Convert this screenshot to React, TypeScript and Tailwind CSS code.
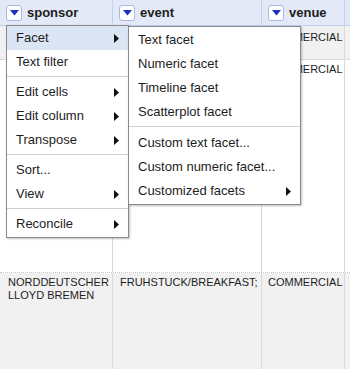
import React from 'react';

const HEADERS = [
    { name: 'sponsor', width: 'w-[113px]', pad: 'pl-[8px]' },
    { name: 'event', width: 'w-[149px]', pad: 'pl-[7px]' },
    { name: 'venue', width: 'w-[83px]', pad: 'pl-[6px]' },
];

const ROWS = [
    { height: 'h-[34px]', bg: 'bg-[#f1f1f1]', border: 'border-b border-dotted border-[#c8c8c8]', pad: 'pt-[5px]', cells: ['', '', 'COMMERCIAL'] },
    { height: 'h-[213px]', bg: 'bg-white', border: 'border-b border-dotted border-[#c8c8c8]', pad: 'pt-[3px]', cells: ['', '', 'COMMERCIAL'] },
    { height: 'h-[120px]', bg: 'bg-[#f1f1f1]', border: '', pad: 'pt-[3px]', cells: ['NORDDEUTSCHER LLOYD BREMEN', 'FRUHSTUCK/BREAKFAST;', 'COMMERCIAL'] },
];

type MenuEntry = { label: string; sub?: boolean; active?: boolean } | 'sep';

const MAIN_MENU: MenuEntry[] = [
    { label: 'Facet', sub: true, active: true },
    { label: 'Text filter' },
    'sep',
    { label: 'Edit cells', sub: true },
    { label: 'Edit column', sub: true },
    { label: 'Transpose', sub: true },
    'sep',
    { label: 'Sort...' },
    { label: 'View', sub: true },
    'sep',
    { label: 'Reconcile', sub: true },
];

const FACET_MENU: MenuEntry[] = [
    { label: 'Text facet' },
    { label: 'Numeric facet' },
    { label: 'Timeline facet' },
    { label: 'Scatterplot facet' },
    'sep',
    { label: 'Custom text facet...' },
    { label: 'Custom numeric facet...' },
    { label: 'Customized facets', sub: true },
];

function DropButton() {
    return (
        <div className="w-4 h-4 shrink-0 rounded-[3px] border border-[#a9b8e6] bg-white flex items-center justify-center">
            <svg width="9" height="6" viewBox="0 0 9 6">
                <path d="M0 0 H9 L4.5 5.5 Z" fill="#1f2fc4" />
            </svg>
        </div>
    );
}

function Arrow() {
    return (
        <svg width="5" height="9" viewBox="0 0 5 9" className="shrink-0">
            <path d="M0 0 L5 4.5 L0 9 Z" fill="#111" />
        </svg>
    );
}

function Menu({ items, className, sepClass }: { items: MenuEntry[]; className: string; sepClass: string }) {
    return (
        <div className={'absolute bg-white border border-[#8a8a8a] shadow-[1px_1px_2px_rgba(0,0,0,0.25)] ' + className}>
            {items.map((item, i) =>
                item === 'sep' ? (
                    <div key={i} className={'h-px bg-[#cfcfcf] ' + sepClass} />
                ) : (
                    <div
                        key={i}
                        className={
                            'h-6 flex items-center justify-between pl-[9px] pr-[9px] ' +
                            (item.active ? 'bg-[#dbe5f4]' : '')
                        }
                    >
                        <span>{item.label}</span>
                        {item.sub && <Arrow />}
                    </div>
                )
            )}
        </div>
    );
}

export default function App() {
    return (
        <div className="relative w-[350px] h-[369px] overflow-hidden bg-white text-[#1d1d1d] font-['Liberation_Sans',Arial,sans-serif]">
            <div className="flex h-[26px] bg-[#e3e9f7] border-b border-[#c3cfee]">
                {HEADERS.map(h => (
                    <div key={h.name} className={h.width + ' shrink-0 flex items-center gap-[5px] pl-[6px] border-r border-[#c3cfee]'}>
                        <DropButton />
                        <span className="font-bold text-[13px]">{h.name}</span>
                    </div>
                ))}
                <div className="flex-1" />
            </div>

            {ROWS.map((row, r) => (
                <div key={r} className={'flex ' + row.height + ' ' + row.bg + ' ' + row.border}>
                    {row.cells.map((c, i) => (
                        <div
                            key={i}
                            className={HEADERS[i].width + ' ' + HEADERS[i].pad + ' shrink-0 border-r border-[#d9d9d9] pr-[2px] text-[11px] leading-[13px] uppercase ' + row.pad}
                        >
                            {c}
                        </div>
                    ))}
                    <div className="flex-1" />
                </div>
            ))}

            <Menu items={MAIN_MENU} className="left-[6px] top-[25px] w-[123px] text-[13px] pb-px" sepClass="mt-[2px] mb-[3px]" />
            <Menu items={FACET_MENU} className="left-[128px] top-[26px] w-[173px] text-[13px] pt-px pb-px" sepClass="mt-[2px] mb-[4px]" />
        </div>
    );
}
